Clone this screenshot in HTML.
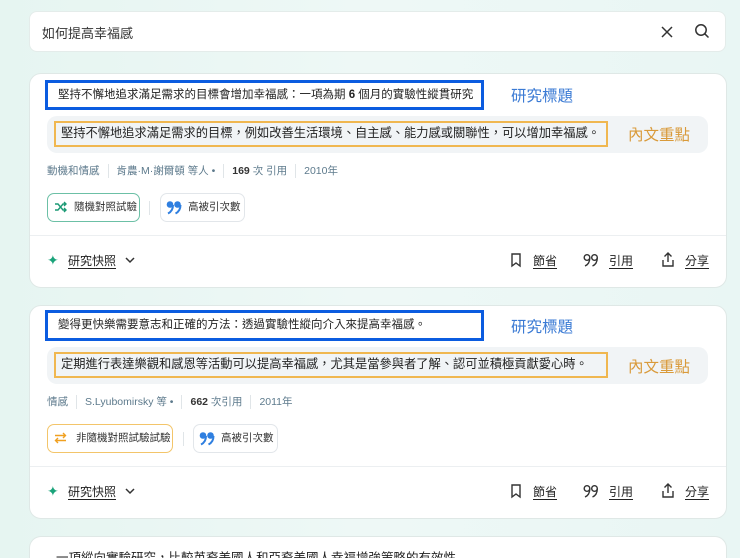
<!DOCTYPE html><html><head><meta charset="utf-8"><style>
*{box-sizing:border-box;margin:0;padding:0}
html,body{width:740px;height:558px;overflow:hidden}
body{background:linear-gradient(90deg,#e6f5f1,#eef8f6 50%,#e9f6f4);font-family:"Liberation Sans","Noto Sans CJK TC",sans-serif;color:#222;position:relative}
.abs{position:absolute}
.search{left:29px;top:11px;width:697px;height:41px;background:#fff;border-radius:8px;border:1px solid #e4ecea}
.card{left:29px;width:698px;background:#fff;border-radius:12px;border:1px solid #dfe8e6}
.tbox{border:3px solid #0b5ce0;font-size:11.5px;line-height:24px;padding-left:10px;color:#222;white-space:nowrap}
.lab1{font-size:15.5px;color:#3a7ad4}
.hl{background:#f1f4f6;border-radius:10px}
.obox{border:2px solid #f0b750;font-size:12.25px;line-height:21px;padding-left:5px;white-space:nowrap;color:#222}
.lab2{font-size:15.5px;color:#d99a3a}
.meta{font-size:10.5px;color:#5d7a8c;white-space:nowrap}
.meta b{color:#333}
.sep{display:inline-block;width:1px;height:14px;background:#e0e5e8;vertical-align:middle;margin:0 8px}
.chip{height:29px;border-radius:7px;border:1px solid #e2e6ea;font-size:10.5px;line-height:27px;padding-left:25px;color:#333;white-space:nowrap}
.div{height:1px;background:#eceff1}
.ft{font-size:12px;color:#222;white-space:nowrap}
.u{text-decoration:underline;text-underline-offset:3px}
</style></head><body>
<div class="abs search"></div>
<div class="abs" style="left:42px;top:23px;font-size:13px;color:#333">如何提高幸福感</div>
<svg class="abs" style="left:660px;top:25px" width="14" height="14"><path d="M2 2L12 12M12 2L2 12" stroke="#333" stroke-width="1.5"/></svg>
<svg class="abs" style="left:694px;top:23px" width="16" height="16"><circle cx="7" cy="7" r="5.2" stroke="#333" stroke-width="1.5" fill="none"/><path d="M10.8 10.8L14.5 14.5" stroke="#333" stroke-width="1.5"/></svg>

<!-- card 1 -->
<div class="abs card" style="top:73px;height:215px"></div>
<div class="abs tbox" style="left:45px;top:80px;width:439px;height:30px">堅持不懈地追求滿足需求的目標會增加幸福感：一項為期 <b>6</b> 個月的實驗性縱貫研究</div>
<div class="abs lab1" style="left:511px;top:84px">研究標題</div>
<div class="abs hl" style="left:47px;top:116px;width:661px;height:37px"></div>
<div class="abs obox" style="left:54px;top:121px;width:554px;height:26px">堅持不懈地追求滿足需求的目標，例如改善生活環境、自主感、能力感或關聯性，可以增加幸福感。</div>
<div class="abs lab2" style="left:628px;top:123px">內文重點</div>
<div class="abs meta" style="left:47px;top:163px">動機和情感<span class="sep"></span>肯農·M·謝爾頓 等人 •<span class="sep"></span><b>169</b> 次 引用<span class="sep"></span>2010年</div>
<div class="abs chip" style="left:47px;top:193px;width:93px;border-color:#6cc0a6;padding-left:26px">隨機對照試驗</div>
<svg class="abs" style="left:54px;top:201px" width="13" height="12"><path d="M1 3h3l5 6h3M1 9h3l5-6h3M10 1l2 2-2 2M10 7l2 2-2 2" stroke="#1c9a75" stroke-width="1.4" fill="none"/></svg>
<span class="abs sep" style="left:149px;top:201px;margin:0"></span>
<div class="abs chip" style="left:160px;top:193px;width:85px;padding-left:27px">高被引次數</div>
<svg class="abs" style="left:166px;top:200px" width="16" height="15"><circle cx="4" cy="4.5" r="3.3" fill="#2f7fe0"/><circle cx="11.5" cy="4.5" r="3.3" fill="#2f7fe0"/><path d="M7 5Q7 11 2 13.5M14.5 5Q14.5 11 9.5 13.5" stroke="#2f7fe0" stroke-width="2" fill="none"/></svg>
<div class="abs div" style="left:30px;top:235px;width:696px"></div>
<div class="abs" style="left:47px;top:252px;color:#1aa37a;font-size:14px">✦</div>
<div class="abs ft" style="left:68px;top:252px"><span class="u">研究快照</span></div>
<svg class="abs" style="left:124px;top:255px" width="12" height="10"><path d="M2 3l4 4 4-4" stroke="#333" stroke-width="1.5" fill="none"/></svg>
<svg class="abs" style="left:509px;top:252px" width="14" height="16"><path d="M3 2h8v12l-4-3-4 3z" stroke="#333" stroke-width="1.4" fill="none"/></svg>
<div class="abs ft" style="left:533px;top:252px"><span class="u">節省</span></div>
<svg class="abs" style="left:583px;top:253px" width="16" height="15"><circle cx="4" cy="4.5" r="2.8" stroke="#333" stroke-width="1.4" fill="none"/><circle cx="11.5" cy="4.5" r="2.8" stroke="#333" stroke-width="1.4" fill="none"/><path d="M6.8 4.5Q6.8 11 2 13M14.3 4.5Q14.3 11 9.5 13" stroke="#333" stroke-width="1.4" fill="none"/></svg>
<div class="abs ft" style="left:609px;top:252px"><span class="u">引用</span></div>
<svg class="abs" style="left:660px;top:251px" width="16" height="17"><path d="M8 11V2M4.5 5.5L8 2l3.5 3.5M3 9v6h10V9" stroke="#333" stroke-width="1.4" fill="none"/></svg>
<div class="abs ft" style="left:685px;top:252px"><span class="u">分享</span></div>

<!-- card 2 -->
<div class="abs card" style="top:305px;height:214px"></div>
<div class="abs tbox" style="left:45px;top:310px;width:439px;height:31px">變得更快樂需要意志和正確的方法：透過實驗性縱向介入來提高幸福感。</div>
<div class="abs lab1" style="left:511px;top:315px">研究標題</div>
<div class="abs hl" style="left:47px;top:347px;width:661px;height:37px"></div>
<div class="abs obox" style="left:54px;top:352px;width:554px;height:26px">定期進行表達樂觀和感恩等活動可以提高幸福感，尤其是當參與者了解、認可並積極貢獻愛心時。</div>
<div class="abs lab2" style="left:628px;top:355px">內文重點</div>
<div class="abs meta" style="left:47px;top:394px">情感<span class="sep"></span>S.Lyubomirsky 等 •<span class="sep"></span><b>662</b> 次引用<span class="sep"></span>2011年</div>
<div class="abs chip" style="left:47px;top:424px;width:126px;border-color:#f3c56a;padding-left:28px">非隨機對照試驗試驗</div>
<svg class="abs" style="left:54px;top:432px" width="13" height="12"><path d="M1 3.5h10M9 1l2.5 2.5L9 6M12 8.5H2M4 6L1.5 8.5 4 11" stroke="#f0a020" stroke-width="1.4" fill="none"/></svg>
<span class="abs sep" style="left:183px;top:432px;margin:0"></span>
<div class="abs chip" style="left:193px;top:424px;width:85px;padding-left:27px">高被引次數</div>
<svg class="abs" style="left:199px;top:431px" width="16" height="15"><circle cx="4" cy="4.5" r="3.3" fill="#2f7fe0"/><circle cx="11.5" cy="4.5" r="3.3" fill="#2f7fe0"/><path d="M7 5Q7 11 2 13.5M14.5 5Q14.5 11 9.5 13.5" stroke="#2f7fe0" stroke-width="2" fill="none"/></svg>
<div class="abs div" style="left:30px;top:466px;width:696px"></div>
<div class="abs" style="left:47px;top:483px;color:#1aa37a;font-size:14px">✦</div>
<div class="abs ft" style="left:68px;top:483px"><span class="u">研究快照</span></div>
<svg class="abs" style="left:124px;top:486px" width="12" height="10"><path d="M2 3l4 4 4-4" stroke="#333" stroke-width="1.5" fill="none"/></svg>
<svg class="abs" style="left:509px;top:483px" width="14" height="16"><path d="M3 2h8v12l-4-3-4 3z" stroke="#333" stroke-width="1.4" fill="none"/></svg>
<div class="abs ft" style="left:533px;top:483px"><span class="u">節省</span></div>
<svg class="abs" style="left:583px;top:484px" width="16" height="15"><circle cx="4" cy="4.5" r="2.8" stroke="#333" stroke-width="1.4" fill="none"/><circle cx="11.5" cy="4.5" r="2.8" stroke="#333" stroke-width="1.4" fill="none"/><path d="M6.8 4.5Q6.8 11 2 13M14.3 4.5Q14.3 11 9.5 13" stroke="#333" stroke-width="1.4" fill="none"/></svg>
<div class="abs ft" style="left:609px;top:483px"><span class="u">引用</span></div>
<svg class="abs" style="left:660px;top:482px" width="16" height="17"><path d="M8 11V2M4.5 5.5L8 2l3.5 3.5M3 9v6h10V9" stroke="#333" stroke-width="1.4" fill="none"/></svg>
<div class="abs ft" style="left:685px;top:483px"><span class="u">分享</span></div>

<!-- card 3 -->
<div class="abs card" style="top:536px;height:40px;border-bottom:none;border-radius:12px 12px 0 0"></div>
<div class="abs" style="left:56px;top:547px;font-size:12.5px;white-space:nowrap">一項縱向實驗研究，比較英裔美國人和亞裔美國人幸福增強策略的有效性</div>
</body></html>
